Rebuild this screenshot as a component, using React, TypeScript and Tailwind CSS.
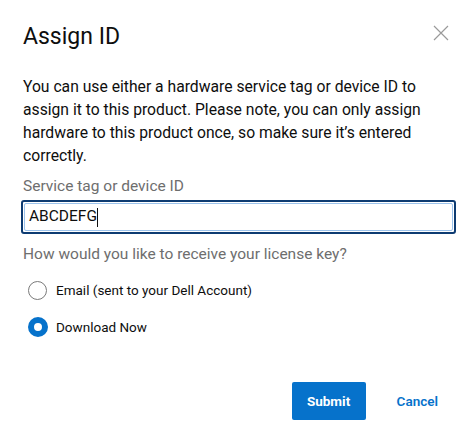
import React from "react";

export default function App() {
  return (
    <div className="w-[474px] h-[442px] bg-white relative" style={{ fontFamily: "Roboto, 'Liberation Sans', sans-serif" }}>
      <div className="pl-[23px] pr-[17px] pt-[21px]">
        <div className="flex items-start justify-between">
          <h1 className="text-[23px] leading-[32px] text-[#0e0e0e] font-normal">Assign ID</h1>
          <button className="mt-[4px] mr-[8px] w-[16px] h-[16px] text-[#9a9a9a]" aria-label="Close">
            <svg viewBox="0 0 16 16" width="16" height="16" fill="none" stroke="currentColor" strokeWidth="1.2">
              <path d="M1 1 L15 15 M15 1 L1 15" />
            </svg>
          </button>
        </div>
        <p className="mt-[22px] text-[15.7px] leading-[23px] text-[#0e0e0e]">
          You can use either a hardware service tag or device ID to assign it to this product. Please note, you can only assign hardware to this product once, so make sure it’s entered correctly.
        </p>
        <label className="block mt-[7px] text-[15.5px] leading-[24px] text-[#6e6e6e]">Service tag or device ID</label>
        <div className="mt-[2px] -ml-[2px] w-[435px] h-[34px] rounded-[3px] border-2 border-[#0d3b72] p-[1px]">
          <div className="h-full w-full rounded-[2px] border border-[#9cc3ec] flex items-center pl-[4px] text-[15.5px] text-[#0e0e0e]">
            ABCDEFG<span className="inline-block w-[1px] h-[19px] bg-[#0e0e0e]"></span>
          </div>
        </div>
        <div className="mt-[8px] text-[15.5px] leading-[24px] text-[#6e6e6e]">How would you like to receive your license key?</div>
        <div className="mt-[14px] flex items-center h-[20px]">
          <span className="ml-[5px] w-[19px] h-[19px] rounded-full border border-[#7a7a7a] bg-white"></span>
          <span className="ml-[9px] text-[13.5px] text-[#0e0e0e]">Email (sent to your Dell Account)</span>
        </div>
        <div className="mt-[17px] flex items-center h-[20px]">
          <span className="ml-[5px] w-[20px] h-[20px] rounded-full border-[6px] border-[#0672cb] bg-white"></span>
          <span className="ml-[8px] text-[13.5px] text-[#0e0e0e]">Download Now</span>
        </div>
        <div className="mt-[45px] flex justify-end items-center pr-[19px]">
          <button className="w-[74px] h-[38px] rounded-[2px] bg-[#0672cb] text-white text-[13.5px] font-bold">Submit</button>
          <button className="ml-[31px] text-[#0672cb] text-[13.5px] font-semibold">Cancel</button>
        </div>
      </div>
    </div>
  );
}
